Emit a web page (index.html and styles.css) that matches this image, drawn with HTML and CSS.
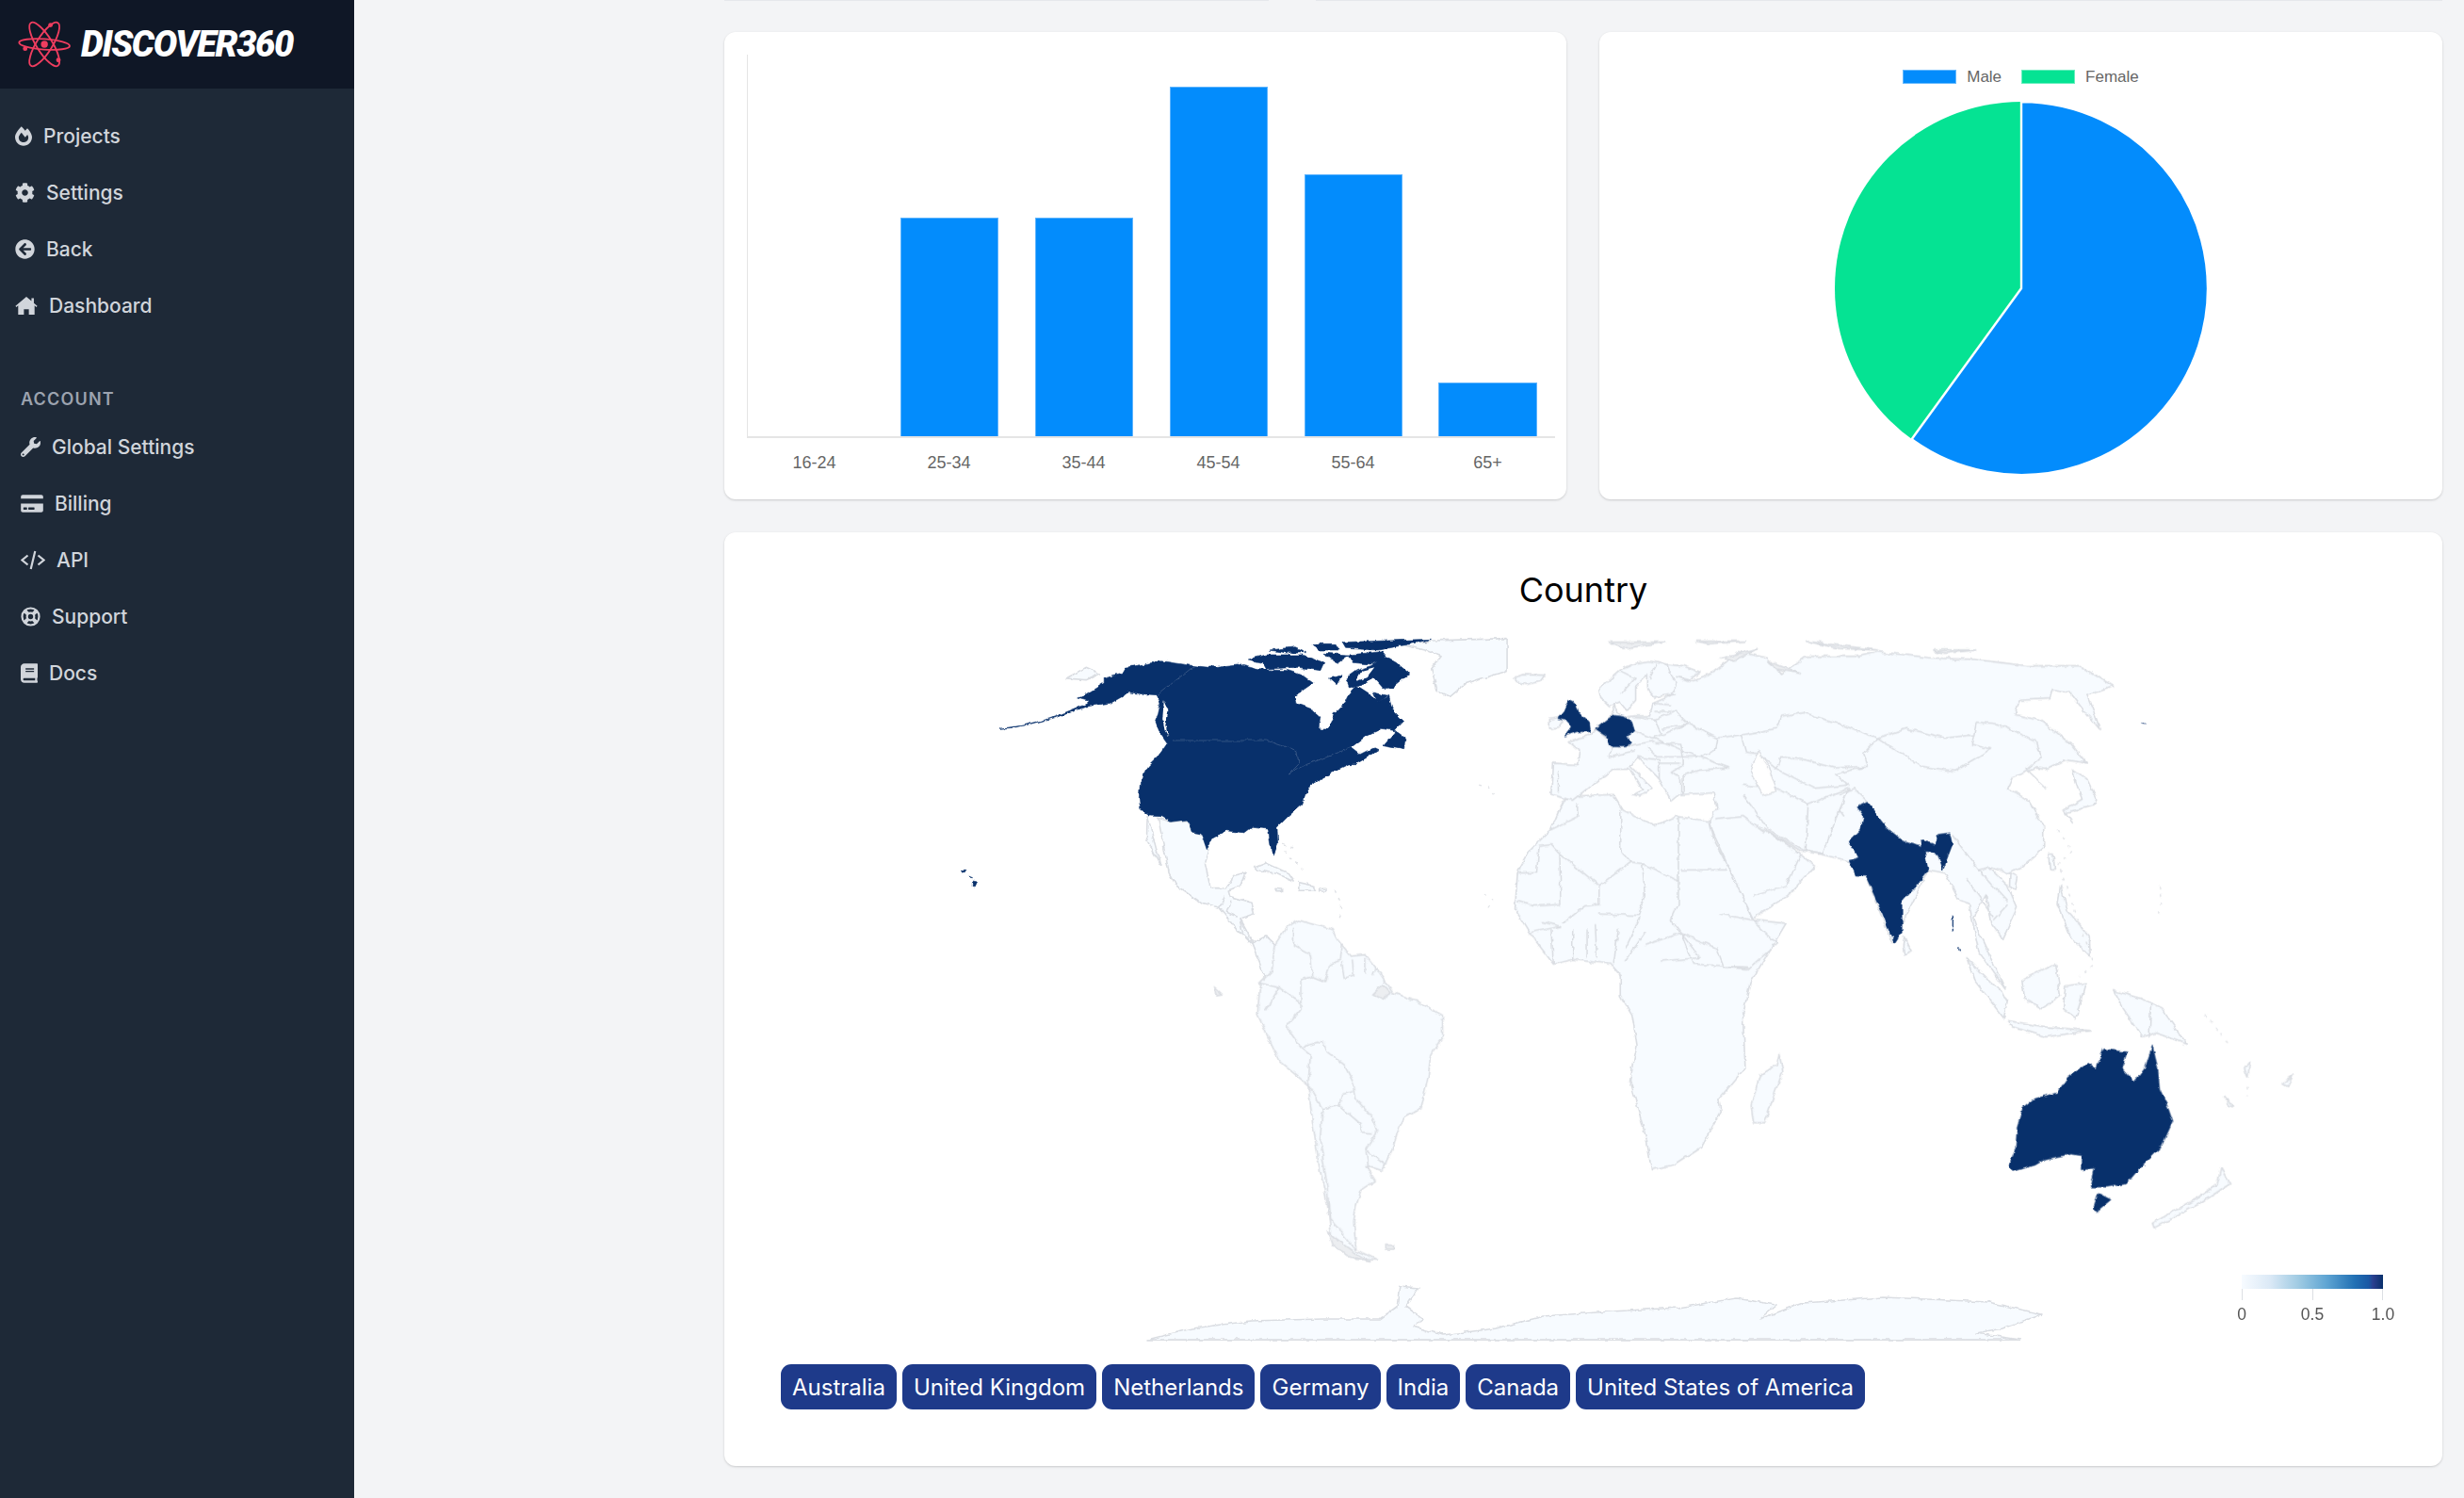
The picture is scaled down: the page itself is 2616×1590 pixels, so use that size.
FILE: index.html
```html
<!DOCTYPE html>
<html lang="en">
<head>
<meta charset="utf-8">
<title>Discover360</title>
<link rel="stylesheet" href="styles.css">
</head>
<body>
<aside class="sidebar">
  <a class="brand">
    <svg class="logo" viewBox="0 0 64 56">
      <g fill="none" stroke="#ef3d5f" stroke-width="2">
        <ellipse cx="30" cy="28" rx="29" ry="6" transform="rotate(4 30 28)"/>
        <ellipse cx="30" cy="28" rx="29" ry="9" transform="rotate(58 30 28)"/>
        <ellipse cx="30" cy="28" rx="29" ry="9" transform="rotate(-58 30 28)"/>
      </g>
      <g fill="#ef3d5f">
        <circle cx="30" cy="28" r="4"/><circle cx="37" cy="6" r="2.6"/><circle cx="8" cy="33" r="2.6"/><circle cx="46" cy="46" r="2.6"/>
      </g>
    </svg>
    <span class="brand-name">DISCOVER360</span>
  </a>
  <nav class="nav nav-main">
    <a class="nav-item"><svg class="ico w448" viewBox="0 0 448 512"><path d="M323.56 51.2c-20.8 19.3-39.58 39.59-56.22 59.97C240.08 73.62 206.28 35.53 168 0 69.74 91.17 0 209.96 0 281.6 0 408.85 100.29 512 224 512s224-103.15 224-230.4c0-53.27-51.98-163.14-124.44-230.4zm-19.47 340.65C282.43 407.01 255.72 416 226.86 416 154.71 416 96 368.26 96 290.75c0-38.61 24.31-72.63 72.79-130.75 6.93 7.98 98.83 125.34 98.83 125.34l58.63-66.88c4.14 6.85 7.91 13.55 11.27 19.97 27.35 52.19 15.81 118.97-33.43 153.42z"/></svg>Projects</a>
    <a class="nav-item"><svg class="ico w512" viewBox="0 0 512 512"><path d="M487.4 315.7l-42.6-24.6c4.3-23.2 4.3-47 0-70.2l42.6-24.6c4.9-2.8 7.1-8.6 5.5-14-11.1-35.6-30-67.8-54.7-94.6-3.8-4.1-10-5.1-14.8-2.3L380.8 110c-17.9-15.4-38.5-27.3-60.8-35.1V25.8c0-5.6-3.9-10.5-9.4-11.7-36.7-8.2-74.3-7.8-109.2 0-5.5 1.2-9.4 6.1-9.4 11.7V75c-22.2 7.9-42.8 19.8-60.8 35.1L88.7 85.5c-4.9-2.8-11-1.9-14.8 2.3-24.7 26.7-43.6 58.9-54.7 94.6-1.7 5.4.6 11.2 5.5 14L67.3 221c-4.3 23.2-4.3 47 0 70.2l-42.6 24.6c-4.9 2.8-7.1 8.6-5.5 14 11.1 35.6 30 67.8 54.7 94.6 3.8 4.1 10 5.1 14.8 2.3l42.6-24.6c17.9 15.4 38.5 27.3 60.8 35.1v49.2c0 5.6 3.9 10.5 9.4 11.7 36.7 8.2 74.3 7.8 109.2 0 5.5-1.2 9.4-6.1 9.4-11.7v-49.2c22.2-7.9 42.8-19.8 60.8-35.1l42.6 24.6c4.9 2.8 11 1.9 14.8-2.3 24.7-26.7 43.6-58.9 54.7-94.6 1.5-5.5-.7-11.3-5.6-14.1zM256 336c-44.1 0-80-35.9-80-80s35.9-80 80-80 80 35.9 80 80-35.9 80-80 80z"/></svg>Settings</a>
    <a class="nav-item"><svg class="ico w512" viewBox="0 0 512 512"><path d="M256 504C119 504 8 393 8 256S119 8 256 8s248 111 248 248-111 248-248 248zm28.9-143.6L209.4 288H392c13.3 0 24-10.7 24-24v-16c0-13.3-10.7-24-24-24H209.4l75.5-72.4c9.7-9.3 9.9-24.8.4-34.3l-11-10.9c-9.4-9.4-24.6-9.4-33.9 0L107.7 239c-9.4 9.4-9.4 24.6 0 33.9l132.7 132.7c9.4 9.4 24.6 9.4 33.9 0l11-10.9c9.5-9.5 9.3-25-.4-34.3z"/></svg>Back</a>
    <a class="nav-item"><svg class="ico w576" viewBox="0 0 576 512"><path d="M288 24 420 135V60H482V187L570 262 548 292 500 252V488H352V348H224V488H76V252L28 292 6 262Z"/></svg>Dashboard</a>
  </nav>
  <div class="nav-heading">ACCOUNT</div>
  <nav class="nav nav-account">
    <a class="nav-item"><svg class="ico w512" viewBox="0 0 512 512"><path d="M507.73 109.1c-2.24-9.03-13.54-12.09-20.12-5.51l-74.36 74.36-67.88-11.31-11.31-67.88 74.36-74.36c6.62-6.62 3.43-17.9-5.66-20.16-47.38-11.74-99.55.91-136.58 37.93-39.64 39.64-50.55 97.1-34.05 147.2L18.74 402.76c-24.99 24.99-24.99 65.51 0 90.5 24.99 24.99 65.51 24.99 90.5 0l213.21-213.21c50.12 16.71 107.47 5.68 147.37-34.22 37.07-37.07 49.7-89.32 37.91-136.73zM64 472c-13.25 0-24-10.75-24-24 0-13.26 10.75-24 24-24s24 10.74 24 24c0 13.25-10.75 24-24 24z"/></svg>Global Settings</a>
    <a class="nav-item"><svg class="ico w576" viewBox="0 0 576 512"><path d="M0 432c0 26.5 21.5 48 48 48h480c26.5 0 48-21.5 48-48V256H0v176zm192-68c0-6.6 5.4-12 12-12h136c6.6 0 12 5.4 12 12v40c0 6.6-5.4 12-12 12H204c-6.6 0-12-5.4-12-12v-40zm-128 0c0-6.6 5.4-12 12-12h72c6.6 0 12 5.4 12 12v40c0 6.6-5.4 12-12 12H76c-6.6 0-12-5.4-12-12v-40zM576 80v48H0V80c0-26.5 21.5-48 48-48h480c26.5 0 48 21.5 48 48z"/></svg>Billing</a>
    <a class="nav-item"><svg class="ico w640" viewBox="0 0 26 21"><path class="thin" d="M7.5 5.5 1.5 10.5 7.5 15.5M18.5 5.5 24.5 10.5 18.5 15.5M15.3 1 10.7 20"/></svg>API</a>
    <a class="nav-item"><svg class="ico w512" viewBox="0 0 21 21"><circle class="thin" cx="10.5" cy="10.5" r="9"/><circle class="thin" cx="10.5" cy="10.5" r="3.8"/><path class="ring" d="M4 4 7.6 7.6M17 4 13.4 7.6M4 17 7.6 13.4M17 17 13.4 13.4"/></svg>Support</a>
    <a class="nav-item"><svg class="ico w448" viewBox="0 0 448 512"><path d="M448 360V24c0-13.3-10.7-24-24-24H96C43 0 0 43 0 96v320c0 53 43 96 96 96h328c13.3 0 24-10.7 24-24v-16c0-7.5-3.5-14.3-8.9-18.7-4.2-15.4-4.2-59.3 0-74.7 5.4-4.3 8.9-11.1 8.9-18.6zM128 134c0-3.3 2.7-6 6-6h212c3.3 0 6 2.7 6 6v20c0 3.3-2.7 6-6 6H134c-3.3 0-6-2.7-6-6v-20zm0 64c0-3.3 2.7-6 6-6h212c3.3 0 6 2.7 6 6v20c0 3.3-2.7 6-6 6H134c-3.3 0-6-2.7-6-6v-20zm253.4 250H96c-17.7 0-32-14.3-32-32 0-17.6 14.4-32 32-32h285.4c-1.9 17.1-1.9 46.9 0 64z"/></svg>Docs</a>
  </nav>
</aside>
<main class="main">
  <div class="stub-row"><div class="stub"></div><div class="stub"></div></div>
  <div class="grid">
    <section class="card bar-card">
      <div class="plot">
        <div class="col"></div>
        <div class="col"><div class="bar" style="height:57.2%"></div></div>
        <div class="col"><div class="bar" style="height:57.2%"></div></div>
        <div class="col"><div class="bar" style="height:91.5%"></div></div>
        <div class="col"><div class="bar" style="height:68.6%"></div></div>
        <div class="col"><div class="bar" style="height:14.2%"></div></div>
      </div>
      <div class="xlabels"><span>16-24</span><span>25-34</span><span>35-44</span><span>45-54</span><span>55-64</span><span>65+</span></div>
    </section>
    <section class="card pie-card">
      <div class="legend">
        <span class="swatch male"></span><span class="legend-text">Male</span>
        <span class="swatch female"></span><span class="legend-text">Female</span>
      </div>
      <svg class="pie" viewBox="-200 -200 400 400">
        <circle r="198" fill="#05e393"/>
        <path d="M0 0V-198A198 198 0 1 1 -116.4 160.2Z" fill="#038cfc" stroke="#fff" stroke-width="2.4"/>
      </svg>
    </section>
    <section class="card map-card">
      <h2 class="map-title">Country</h2>
      <svg class="map" viewBox="769 670 1823 760">
        <defs>
          <linearGradient id="scale">
            <stop offset="0" stop-color="#f7fbff"/><stop offset=".2" stop-color="#dbe9f6"/><stop offset=".4" stop-color="#a0cbe3"/><stop offset=".6" stop-color="#5fa5d3"/><stop offset=".8" stop-color="#2170b4"/><stop offset=".9" stop-color="#1a58a4"/><stop offset=".93" stop-color="#2b3f8f"/><stop offset="1" stop-color="#08306b"/>
          </linearGradient>
          <filter id="rough" x="769" y="670" width="1823" height="760" filterUnits="userSpaceOnUse" color-interpolation-filters="sRGB">
            <feTurbulence type="fractalNoise" baseFrequency=".11" numOctaves="3" seed="7" result="n"/>
            <feDisplacementMap in="SourceGraphic" in2="n" scale="5" xChannelSelector="R" yChannelSelector="G"/>
          </filter>
        </defs>

        <g filter="url(#rough)">
        <!-- Americas north -->
        <g transform="translate(1000 640) scale(.3827 .3333)">
          <path class="land" d="M1270 132 1360 120 1568 113V215L1450 260 1410 298 1375 280 1358 210 1385 170 1340 150Z"/>
          <path class="land" d="M345 240 400 205 440 225 400 245Z"/>
          <path class="land" d="M570 680 585 740 606 835 590 800 568 750Z"/>
          <path class="land" d="M600 685 635 697 680 693 695 730 720 735 742 785 730 830 745 908 790 908 812 868 842 858 828 900 795 915 800 935 860 955 866 990 825 1005 862 1082 898 1062 925 1090 1000 1030 1000 1100 900 1200 860 1085 820 1040 770 970 720 955 650 900 630 860Z"/>
          <path class="border" d="M785 935 770 970M800 950 790 985 820 1000M825 1005 835 1050"/>
          <path class="land" d="M868 842 900 828 960 860 975 885 930 862 880 852Z"/>
          <path class="land" d="M990 890 1030 900 1036 916 990 916Z"/>
          <path class="land" d="M925 910 945 912 945 920 928 920Z"/>
          <path class="land" d="M1047 910 1066 910 1066 918 1047 918Z"/>
          <path class="dots" d="M1090 915 1105 950 1108 985 1100 1010M1490 580 1515 585 1530 610M1505 930 1530 945 1515 970M975 780 945 770 955 800 990 830 1005 860"/>
          <path class="us" d="M160 400 240 388 330 360 400 330 470 318 520 285 560 290 598 293 606 320 600 350 592 375 605 415 625 448 605 480 570 520 550 570 547 620 550 655 575 678 610 680 635 697 680 690 695 730 720 735 735 785 750 750 790 725 840 732 860 715 905 720 915 790 920 802 932 770 930 715 960 680 1000 640 1015 590 1050 560 1090 535 1130 512 1150 512 1210 470 1195 462 1160 482 1135 460 1175 425 1220 400 1260 408 1225 455 1282 467 1285 430 1255 405 1280 375 1250 340 1240 295 1210 315 1190 295 1150 265 1130 290 1120 315 1090 350 1072 402 1045 402 1050 360 1030 340 985 320 980 295 1030 255 1000 230 960 215 880 212 820 195 740 205 700 200 610 185 510 205 500 225 450 240 450 255 400 290 378 300 410 310 400 322 300 368 200 397Z"/>
          <path class="us" d="M1110 125 1360 115 1280 135 1210 150 1120 145Z"/>
          <path class="us" d="M1120 240 1150 215 1190 200 1230 170 1260 190 1298 225 1250 270 1225 272 1200 240 1160 265 1130 270Z"/>
          <path class="us" d="M850 180 900 165 1000 165 1060 190 1050 215 990 205 900 210 890 190Z"/>
          <path class="us" d="M1060 160 1130 165 1100 190 1075 180Z"/>
          <path class="us" d="M1075 240 1110 230 1095 260Z"/>
          <path class="us" d="M910 150 980 140 1010 155 950 158Z"/>
          <path class="us" d="M1030 130 1090 130 1100 150 1040 150Z"/>
          <path class="us" d="M1130 165 1220 155 1235 175 1190 195 1140 190Z"/>
          <path class="us" d="M1195 285 1235 295 1210 318Z"/>
          <path class="us" d="M50 850 65 850 60 858ZM75 870 85 875 80 880ZM85 885 98 888 92 903 84 900Z"/>
          <path class="hole" d="M1165 215 1200 205 1180 235 1150 245Z"/>
          <path class="hole" d="M616 310 628 345 620 390 628 425 618 405 612 370Z"/>
          <path class="us-line" d="M700 200 598 293M640 438 900 438 985 470 990 510 965 540 1010 515 1070 490 1135 460"/>
        </g>

        <!-- South America, southern Africa, Madagascar -->
        <g transform="translate(1200 960) scale(.5102 .3333)">
          <path class="land" d="M350 50 325 72 300 130 295 210 270 250 265 350 310 500 370 575 380 700 395 850 410 950 420 1070 470 1130 515 1132 470 1100 465 1010 470 960 480 910 510 880 490 830 525 848 545 780 560 710 570 680 605 650 620 550 625 480 650 420 650 355 600 310 545 280 510 200 490 160 460 165 430 110 420 80Z"/>
          <path class="border" d="M340 75 340 130 375 160 380 230 405 245 415 195 435 175 440 125M440 180 445 235 465 225 462 175M490 170 490 220M510 195 505 225M380 230 355 240 355 335 325 390 355 455 400 435 410 470 445 510 465 570 470 620 505 680 515 720 490 780 530 830M270 250 310 265 355 315M310 265 280 340M370 575 375 480 355 455M400 650 435 640 440 605 465 595M435 640 480 700 480 725 505 728M400 650 395 750 410 900 415 1000 470 1100M370 575 400 650M490 780 495 830"/>
          <path class="land-thick" d="M505 285 525 255 540 280 528 305ZM530 1085 548 1085 548 1098 530 1098ZM176 265 190 285 178 288ZM410 1040 425 1060 470 1110 500 1135 450 1120 420 1080Z"/>
          <path class="land" d="M1350 475 1358 530 1330 650 1320 695 1297 695 1292 640 1310 545 1345 510Z"/>
          <path class="border" d="M1020 230 1060 230 1060 290 1090 210 1170 175 1200 200 1230 200 1230 280 1190 290 1190 400 1220 430 1235 520 1215 505 1185 490 1130 455 1125 385 1105 365 1045 365M1190 290 1225 280 1270 345 1275 440 1230 465 1225 430M1125 385 1130 490 1125 550 1040 560M1125 550 1140 570 1150 575 1205 535 1215 510M1040 560 1115 570 1105 640 1105 720 1075 750M1115 570 1150 570 1180 640 1145 680 1130 710 1105 720M1150 570 1185 535 1210 570 1195 640 1180 640M1195 640 1200 700M1235 520 1225 600M1155 750 1175 750 1170 780 1155 775Z"/>
        </g>

        <!-- Eurasia, northern Africa, Asia -->
        <g transform="translate(1560 640) scale(.5102 .3333)">
          <path class="land" d="M92 238 111 228 157 230 147 250 118 260 98 250Z"/>
          <path class="land" d="M167 370 186 365 196 380 189 395 167 400Z"/>
          <path class="land" d="M195 630 225 615 300 610 320 660 385 710 430 680 500 695 510 760 560 900 590 1010 659 1020 584 1210 569 1310 574 1480 519 1580 524 1620 484 1730 424 1790 379 1805 369 1710 334 1520 349 1410 339 1315 314 1250 314 1185 294 1150 215 1135 175 1150 125 1050 95 975 100 860 125 790 170 720Z"/>
          <path class="border" d="M225 640 225 680 170 722M170 770 185 795M100 860 140 860 145 775 170 770M185 795 270 900 335 825M315 660 315 790 335 825M360 830 435 885 435 680M440 850 535 850M435 885 435 960 420 1010 440 1050M270 900 270 960 240 965 195 1020M360 830 365 930 350 995 270 990M190 960 135 965 100 950M190 960 188 800M170 1040 175 1150M215 1040 215 1135M245 1040 245 1130M262 1020 265 1130M310 1040 300 1150M355 1000 325 1100M365 1050 325 1140M365 1090 440 1050 480 1130 400 1140M440 1050 465 1150 580 1160M520 990 590 1010 640 1085 580 1165 530 1160 515 1100 440 1050M335 825 360 830M150 1015 190 1030 125 1050"/>
          <path class="land" d="M560 155 620 175 650 225 700 170 810 170 850 155 960 175 1050 180 1160 200 1270 200 1340 265 1285 295 1305 370 1312 402 1280 345 1250 285 1215 275 1210 305 1145 310 1135 355 1190 375 1250 445 1285 510 1240 500 1200 530 1180 525 1130 555 1120 590 1165 630 1195 710 1195 780 1150 840 1120 860 1080 840 1120 900 1140 970 1110 1070 1085 1020 1075 930 1050 1000 1060 1050 1115 1230 1060 1110 1040 960 1020 950 990 860 955 850 880 1085 825 870 785 820 730 800 690 790 635 740 612 720 680 790 720 840 660 935 590 1005 510 745 500 690 515 650 510 605 440 610 440 560 420 540 445 515 445 490 480 490 540 525 480 532 445 548 445 600 420 630 395 560 350 490 335 520 380 590 355 615 340 610 360 595 335 530 300 530 255 580 215 628 170 610 173 510 225 515 229 470 206 440 251 420 264 400 281 380 294 360 304 325 307 350 320 365 343 360 375 360 382 320 428 290 385 300 369 270 369 230 346 265 346 310 327 342 313 315 291 330 271 300 268 275 291 245 313 215 340 195 372 185 411 195 444 200 480 220 457 245 431 235 457 250 503 225 535 190Z"/>
          <path class="border" d="M313 215 345 240 315 290M390 195 375 240M411 195 430 265 415 300M385 320 420 325M385 345 420 345M340 365 385 370 400 420 380 430 340 405M385 370 430 345 455 385 400 400M400 420 455 385 515 430 510 470 480 490 440 470 385 430M385 445 440 450 445 490 390 490 370 460M390 510 440 510M265 405 300 450 290 490M185 535 185 605M290 490 345 470M310 460 385 440M350 490 395 500 395 560M565 420 640 400 650 360 695 350 760 380 850 430 820 480 830 520 760 525 700 500 650 490 640 530 600 480 575 475 565 420M515 430 565 420M850 430 910 400 990 430 1050 420 1055 380 1100 385 1180 440 1190 490 1160 530 1200 590M850 430 900 480 940 520 1010 535 1085 465 1045 450 1050 420M640 530 720 590 790 580 760 545 830 520M570 610 590 650 620 720 700 790 705 640 640 590 570 580M705 640 790 590 770 660 780 680M700 790 735 800 770 660M510 690 570 680 615 730M590 930 660 900 690 800M800 590 830 635M1005 740 1060 850 1085 840M1060 850 1120 950M1035 880 1090 1000M1120 960 1090 1010M770 610 800 590 830 635"/>
          <path class="hole-line" d="M600 470 622 520 640 600 610 612 585 540Z"/>
          <path class="land" d="M1255 530 1285 560 1305 625 1300 645 1240 668 1255 700 1235 660 1275 625 1262 570Z"/>
          <path class="land" d="M1205 800 1215 800 1218 850 1208 850Z"/>
          <path class="land" d="M1125 860 1140 870 1135 912 1124 900Z"/>
          <path class="land" d="M905 1060 920 1110 905 1122 902 1090Z"/>
          <path class="land" d="M1230 900 1245 980 1290 1060 1292 1125 1250 1060 1225 960Z"/>
          <path class="land" d="M1035 1130 1120 1260 1112 1322 1050 1200Z"/>
          <path class="land" d="M1120 1330 1200 1350 1292 1362 1200 1382 1130 1350Z"/>
          <path class="land" d="M1150 1200 1220 1150 1230 1250 1190 1292 1155 1260Z"/>
          <path class="land" d="M1240 1220 1282 1210 1262 1322 1236 1292Z"/>
          <path class="land" d="M1340 1235 1400 1260 1440 1290 1492 1405 1430 1370 1400 1382 1360 1290Z"/>
          <path class="land-thick" d="M290 125 410 125 320 145ZM470 122 575 122 500 130ZM700 122 850 150 770 145ZM965 150 1055 150 990 160ZM525 175 600 145 550 185ZM620 185 690 225 640 210Z"/>
          <path class="border" d="M1418 1275 1415 1385"/>
          <path class="dots" d="M1225 725 1255 790 1225 830 1300 1150 1270 1190M1436 900 1440 960 1435 995"/>
          <path class="us" d="M206 310 222 322 228 350 250 382 252 410 224 410 198 424 214 394 202 374 184 368 196 345Z"/>
          <path class="us" d="M262 402 281 378 299 358 322 362 338 378 344 408 326 425 336 445 326 458 292 458 285 425Z"/>
          <path class="us" d="M805 650 830 635 850 680 868 715 900 755 945 775 955 850 935 890 900 950 900 1050 885 1085 860 990 825 870 805 870 790 820 810 810 790 760 815 720 820 680Z"/>
          <path class="us" d="M940 755 970 770 975 740 1000 735 1005 770 985 850 975 800 945 790Z"/>
          <path class="us-thin" d="M1006 995V1045M1020 1100 1022 1108M1400 383 1408 386"/>
        </g>

        <!-- Oceania -->
        <g transform="translate(2000 1060) scale(.3827 .3333)">
          <path class="land" d="M935 540 960 590 880 650 750 730 745 715 870 635 925 590Z"/>
          <path class="land" d="M945 310 970 345 955 340ZM1000 220 1015 200 1010 250ZM1105 270 1135 245 1120 280Z"/>
          <path class="dots" d="M890 50 960 150M1008 280V310"/>
          <path class="us" d="M345 535 365 480 370 410 385 350 420 318 480 300 510 250 565 205 590 220 610 160 675 170 660 220 695 265 725 220 745 150 760 220 765 290 790 350 802 390 770 470 700 550 670 590 620 600 575 600 585 540 550 545 550 500 520 495 450 510 420 530 360 550Z"/>
          <path class="us" d="M595 620 630 640 590 678 580 670Z"/>
        </g>

        <!-- Antarctica -->
        <path class="land" d="M1218 1422 1266 1410 1328 1402 1404 1400 1465 1400 1483 1387 1486 1365 1506 1367 1493 1387 1511 1400 1501 1408 1532 1417 1588 1410 1639 1397 1710 1392 1782 1388 1843 1378 1886 1385 1868 1400 1914 1383 2000 1377 2069 1380 2111 1382 2168 1395 2126 1410 2098 1415 2145 1422Z"/>
        </g>
        <path class="tick" d="M1218 1422.5H2145"/>

        <!-- Colour scale -->
        <rect x="2380" y="1353" width="150" height="15" fill="url(#scale)"/>
        <path class="tick" d="M2380.5 1368V1380M2455.5 1368V1380M2529.5 1368V1380"/>
        <text class="tick-label" x="2380" y="1401">0</text>
        <text class="tick-label" x="2455" y="1401">0.5</text>
        <text class="tick-label" x="2530" y="1401">1.0</text>
      </svg>
      <div class="tags">
        <span class="tag">Australia</span><span class="tag">United Kingdom</span><span class="tag">Netherlands</span><span class="tag">Germany</span><span class="tag">India</span><span class="tag">Canada</span><span class="tag">United States of America</span>
      </div>
    </section>
  </div>
</main>
</body>
</html>
```
FILE: styles.css
```css
* { box-sizing: border-box; }
html, body { margin: 0; height: 1590px; overflow: hidden; }
body { display: flex; background: #f3f4f6; font-family: "Inter", "Liberation Sans", sans-serif; }

.sidebar { width: 376px; height: 1590px; flex: none; background: #1e2937; color: #d1d5db; }
.brand { display: flex; align-items: center; height: 94px; padding-left: 19px; gap: 7px; background: #0f1726; }
.logo { width: 60px; height: 52px; flex: none; }
.brand-name { font-family: "Roboto", sans-serif; font-weight: 900; font-style: italic; font-size: 38px; color: #fff; letter-spacing: -1.4px; line-height: 1; }

.nav { display: flex; flex-direction: column; }
.nav-main { padding: 20px 0 0 16px; }
.nav-account { padding-left: 22px; }
.nav-item { display: flex; align-items: center; gap: 12px; height: 60px; font-size: 21px; font-weight: 500; color: #d1d5db; }
.nav-heading { margin: 53px 0 0 22px; height: 34px; line-height: 34px; font-size: 18px; font-weight: 600; letter-spacing: 1.2px; color: #9ca3af; }
.nav-heading + .nav { margin-top: 3px; }
.ico { height: 21px; flex: none; fill: currentColor; }
.w448 { width: 18px; }
.w512 { width: 21px; }
.w576 { width: 24px; }
.w640 { width: 26px; }
.thin { fill: none; stroke: currentColor; stroke-width: 2.2; }
.ring { fill: none; stroke: currentColor; stroke-width: 4; }

.main { flex: 1; padding: 0 23px 0 393px; }
.stub-row { display: grid; grid-template-columns: 578px 1fr; gap: 50px; height: 1px; margin-bottom: 33px; }
.stub { background: #e5e7eb; }
.grid { display: grid; grid-template-columns: 894px 895px; grid-template-rows: 496px 991px; gap: 35px; }
.card { background: #fff; border-radius: 12px; box-shadow: 0 1px 3px rgba(0,0,0,.12), 0 1px 2px rgba(0,0,0,.06); }

.bar-card { padding: 24px 12px 0 24px; }
.plot { display: flex; height: 407px; border-left: 1px solid #e5e5e5; border-bottom: 2px solid #e5e5e5; }
.col { flex: 1; display: flex; align-items: flex-end; justify-content: center; }
.bar { width: 73%; background: #038cfc; border: 1px solid #5fb4fd; border-bottom: 0; }
.xlabels { display: flex; padding-top: 16px; font-family: "Liberation Sans", sans-serif; font-size: 18px; color: #666; }
.xlabels span { flex: 1; text-align: center; }

.pie-card { display: flex; flex-direction: column; align-items: center; padding-top: 40px; }
.legend { display: flex; align-items: center; height: 15px; font-family: "Liberation Sans", sans-serif; font-size: 17px; color: #666; }
.swatch { width: 57px; height: 15px; margin-right: 11px; border: 1px solid rgba(255,255,255,.4); }
.male { background: #038cfc; }
.female { background: #05e393; }
.legend-text { margin-right: 21px; }
.legend-text:last-child { margin-right: 0; }
.pie { width: 400px; height: 400px; margin-top: 17px; }

.map-card { grid-column: 1 / span 2; display: flex; flex-direction: column; }
.map-title { margin: 39px 0 0; height: 66px; line-height: 44px; text-align: center; font-size: 36px; font-weight: 400; color: #000; }
.map { display: block; width: 1823px; height: 760px; }
.land { fill: #f7fbff; stroke: #dadde2; stroke-width: 1.6; vector-effect: non-scaling-stroke; stroke-linejoin: round; }
.land-thick { fill: #eceef1; stroke: #dadde2; stroke-width: 1.6; vector-effect: non-scaling-stroke; }
.border { fill: none; stroke: #dadde2; stroke-width: 1.5; vector-effect: non-scaling-stroke; stroke-linejoin: round; }
.dots { fill: none; stroke: #e0e2e6; stroke-width: 1.4; stroke-dasharray: 3 6; vector-effect: non-scaling-stroke; }
.us { fill: #08306b; stroke: #08306b; stroke-width: .6; vector-effect: non-scaling-stroke; }
.us-thin { fill: none; stroke: #08306b; stroke-width: 1.2; vector-effect: non-scaling-stroke; }
.us-line { fill: none; stroke: #3f5d8a; stroke-width: .8; vector-effect: non-scaling-stroke; }
.hole { fill: #fff; stroke: none; }
.hole-line { fill: #fff; stroke: #dadde2; stroke-width: 1.3; vector-effect: non-scaling-stroke; }
.tick { fill: none; stroke: #dcdfe3; stroke-width: 1; }
.tick-label { font-family: "Liberation Sans", sans-serif; font-size: 17.5px; fill: #555; text-anchor: middle; }

.tags { display: flex; gap: 6px; margin: 18px 0 0 60px; }
.tag { display: flex; align-items: center; height: 48px; padding: 0 12px; background: #1e3a8a; color: #fff; border-radius: 11px; font-size: 24px; }
```
